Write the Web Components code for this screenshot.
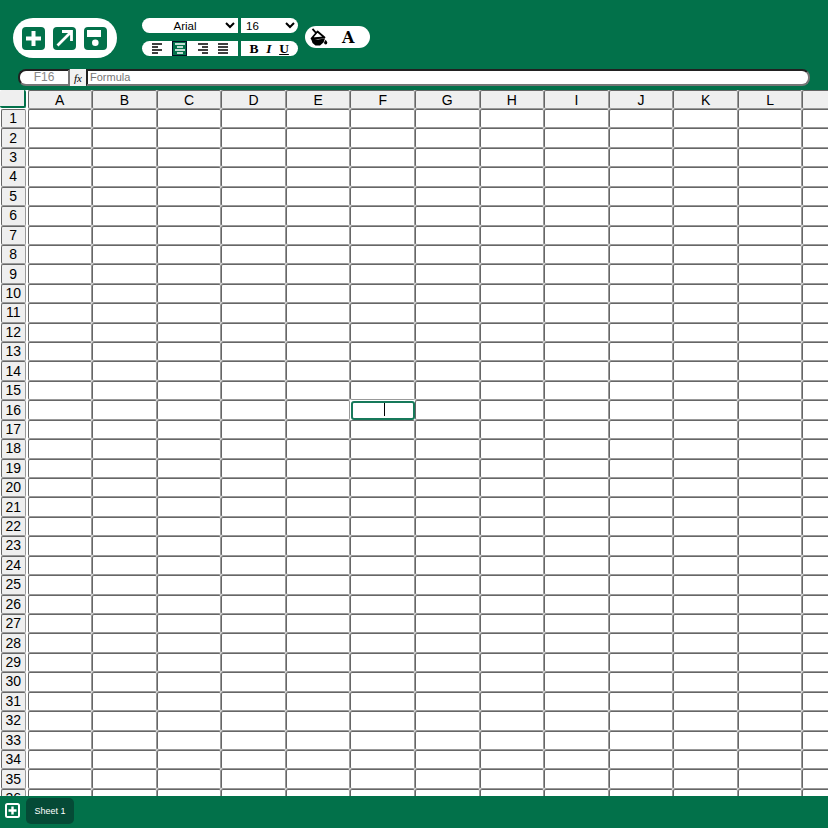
<!DOCTYPE html>
<html>
<head>
<meta charset="utf-8">
<title>Sheet</title>
<style>
  html, body { margin: 0; height: 100%; overflow: hidden; }
  body { font-family: "Liberation Sans", Arial, sans-serif; background: #fff; }
  #app { display: flex; flex-direction: column; height: 828px; }
</style>
</head>
<body>
<div id="app">
  <sheet-toolbar></sheet-toolbar>
  <sheet-grid></sheet-grid>
  <sheet-footer></sheet-footer>
</div>

<script>
const GREEN = "#02714a";

class SheetToolbar extends HTMLElement {
  constructor() {
    super();
    this._shadowRoot = this.attachShadow({ mode: "open" });
  }

  connectedCallback() {
    this.render();
  }

  render() {
    this._shadowRoot.innerHTML = `
    <style>
    :host {
      display: block;
      height: 90px;
      box-sizing: border-box;
      background: ${GREEN};
      padding: 18px 18px 0 13px;
      font-family: "Liberation Sans", Arial, sans-serif;
    }
    .top {
      display: flex;
      align-items: flex-start;
      height: 51px;
    }
    .file {
      display: flex;
      gap: 8px;
      align-items: center;
      box-sizing: border-box;
      width: 104px;
      height: 40px;
      padding-left: 9px;
      background: #fff;
      border-radius: 20px;
    }
    .file svg { width: 23px; height: 23px; display: block; }
    .format {
      display: grid;
      grid-template-columns: 96px 57px;
      grid-template-rows: 15px 15px;
      column-gap: 3px;
      row-gap: 8px;
      margin-left: 25px;
    }
    select {
      height: 15px;
      font: 11.5px "Liberation Sans", Arial, sans-serif;
      color: #000;
      background: #fff;
      border: 0;
      padding: 0;
      margin: 0;
      width: 100%;
    }
    .font { border-radius: 8px 0 0 8px; text-align: center; padding-left: 2px; }
    .size { border-radius: 0 8px 8px 0; padding-left: 1px; }
    .group {
      display: flex;
      align-items: center;
      height: 15px;
      background: #fff;
    }
    .align { border-radius: 8px 0 0 8px; padding-left: 7px; gap: 8px; }
    .style { border-radius: 0 8px 8px 0; padding-left: 8px; gap: 5px; }
    .align span {
      width: 15px;
      height: 15px;
      display: flex;
      align-items: center;
      justify-content: center;
      box-sizing: border-box;
    }
    .align span:last-child { margin-left: -3px; }
    .align span.on { background: ${GREEN}; border: 1px solid #012; }
    .align svg { width: 10px; height: 11px; display: block; }
    .style b, .style i, .style u {
      width: 10px;
      text-align: center;
      font: bold 13.5px "Liberation Serif", serif;
      color: #000;
    }
    .style i { font-style: italic; }
    .colors {
      display: flex;
      align-items: center;
      box-sizing: border-box;
      width: 65px;
      height: 22px;
      margin: 8px 0 0 7px;
      padding-left: 5px;
      background: #fff;
      border-radius: 11px;
    }
    .colors svg { width: 18px; height: 18px; display: block; }
    .colors span {
      margin-left: 14px;
      font: bold 16px "DejaVu Serif", serif;
      color: #000;
    }
    .formula {
      display: flex;
      height: 17px;
      margin-left: 5px;
    }
    input {
      box-sizing: border-box;
      height: 17px;
      margin: 0;
      padding: 0 2px 1px;
      border: 2px inset #767676;
      background: #fff;
      font: 11px "Liberation Sans", Arial, sans-serif;
      outline: 0;
    }
    input::placeholder { color: #757575; }
    .name {
      width: 52px;
      text-align: center;
      color: #888;
      font-size: 12px;
      border-radius: 8px 0 0 8px;
    }
    .fx {
      width: 16px;
      height: 17px;
      display: flex;
      align-items: center;
      justify-content: center;
      background: #f1f1f1;
      font: italic 11px "Liberation Serif", serif;
      color: #000;
    }
    .bar { flex: 1; border-radius: 0 8px 8px 0; }
    </style>

    <div class="top">
      <div class="file">
        <svg viewBox="0 0 23 23"><rect width="23" height="23" rx="4" fill="${GREEN}"/><path d="M9.500 4h4v5.500H19v4h-5.500V19h-4v-5.500H4v-4h5.500z" fill="#fff"/></svg>
        <svg viewBox="0 0 23 23"><rect width="23" height="23" rx="4" fill="${GREEN}"/><path d="M4.500 18.500 18 5M9 4.500h9.500V14" fill="none" stroke="#fff" stroke-width="2.800"/></svg>
        <svg viewBox="0 0 23 23"><rect width="23" height="23" rx="4" fill="${GREEN}"/><rect x="3" y="3" width="14" height="7" fill="#fff"/><circle cx="11.300" cy="15.700" r="3.300" fill="#fff"/></svg>
      </div>
      <div class="format">
        <select class="font"><option>Arial</option></select>
        <select class="size"><option>16</option></select>
        <div class="group align">
          <span><svg viewBox="0 0 10 11"><path d="M0 1h10M0 4h6M0 7h10M0 10h6" stroke="#000" stroke-width="1.300"/></svg></span>
          <span class="on"><svg viewBox="0 0 10 11"><path d="M0 1h10M2 4h6M0 7h10M2 10h6" stroke="#fff" stroke-width="1.300"/></svg></span>
          <span><svg viewBox="0 0 10 11"><path d="M0 1h10M4 4h6M0 7h10M4 10h6" stroke="#000" stroke-width="1.300"/></svg></span>
          <span><svg viewBox="0 0 10 11"><path d="M0 1h10M0 4h10M0 7h10M0 10h10" stroke="#000" stroke-width="1.300"/></svg></span>
        </div>
        <div class="group style"><b>B</b><i>I</i><u>U</u></div>
      </div>
      <div class="colors">
        <svg viewBox="0 0 18 18"><path d="M2.500 .800 6.500 5.500" fill="none" stroke="#000" stroke-width="1.800"/><path d="M1.500 10.500 7.500 3.500 14.500 9.500z" fill="#fff" stroke="#000" stroke-width="1.800" stroke-linejoin="round"/><path d="M1 10.500 8 11.500 15 10.500l-1.500 4-3.500 3H5.500L2.500 15z" fill="#000"/><path d="M15.700 11.800c.9 1.300 1.600 2.100 1.600 3a1.600 1.600 0 0 1-3.200 0c0-.9.700-1.700 1.600-3z" fill="#000"/></svg>
        <span>A</span>
      </div>
    </div>
    <div class="formula">
      <input class="name" value="F16">
      <div class="fx">fx</div>
      <input class="bar" placeholder="Formula">
    </div>
    `;
  }
}

class SheetGrid extends HTMLElement {
  constructor() {
    super();
    this._shadowRoot = this.attachShadow({ mode: "open" });
  }

  connectedCallback() {
    this.render();
  }

  render() {
    const letters = "ABCDEFGHIJKLM".split("");
    let html = `<div class="corner"></div>`;
    letters.forEach((l) => {
      html += `<div class="head">${l === "M" ? "" : l}</div>`;
    });
    for (let r = 1; r <= 36; r++) {
      html += `<div class="num">${r}</div>`;
      letters.forEach((l) => {
        const active = l === "F" && r === 16;
        html += `<div class="cell${active ? " active" : ""}">${active ? "<span></span>" : ""}</div>`;
      });
    }

    this._shadowRoot.innerHTML = `
    <style>
    :host {
      display: block;
      flex: 1;
      min-height: 0;
      overflow: hidden;
      background: #fff;
    }
    .table {
      display: grid;
      grid-template-columns: 27.5px repeat(13, 64.58px);
      grid-template-rows: 19px repeat(36, 19.43px);
      font: 14px "Liberation Sans", Arial, sans-serif;
      color: #000;
    }
    .table > div {
      box-sizing: border-box;
      border: 1px solid;
      border-color: #666 #999 #999 #666;
      border-radius: 2px;
      display: flex;
      align-items: center;
      justify-content: center;
    }
    .table > .corner {
      background: #efefef;
      border-width: 0 2px 2px 0;
      border-color: ${GREEN};
      margin: 0 2px 1px 0;
    }
    .head, .num { background: #efefef; }
    .head { padding-top: 1px; }
    .num { margin: 0 2px 0 1px; padding-bottom: 1px; }
    .table > .active {
      border: 2px solid #17795a;
      border-radius: 3px;
      margin: 1px 0 0 1px;
    }
    .active span { width: 1px; height: 13px; margin: 0 0 3px 2px; background: #000; }
    </style>
    <div class="table">${html}</div>
    `;
  }
}

class SheetFooter extends HTMLElement {
  constructor() {
    super();
    this._shadowRoot = this.attachShadow({ mode: "open" });
  }

  connectedCallback() {
    this.render();
  }

  render() {
    this._shadowRoot.innerHTML = `
    <style>
    :host {
      display: flex;
      align-items: center;
      height: 32px;
      box-sizing: border-box;
      padding: 0 0 3px 5px;
      background: ${GREEN};
      font-family: "Liberation Sans", Arial, sans-serif;
    }
    svg { width: 15px; height: 15px; display: block; }
    .tab {
      display: flex;
      align-items: center;
      justify-content: center;
      width: 48px;
      height: 26px;
      margin-left: 6px;
      background: #054a36;
      border-radius: 5px;
      color: #fff;
      font-size: 9px;
    }
    </style>
    <svg viewBox="0 0 15 15"><rect x="1" y="1" width="13" height="13" rx="1.500" fill="none" stroke="#fff" stroke-width="2"/><path d="M6.300 3.500h2.400v2.800h2.800v2.400H8.700v2.800H6.300V8.700H3.500V6.300h2.800z" fill="#fff"/></svg>
    <div class="tab">Sheet 1</div>
    `;
  }
}

customElements.define("sheet-toolbar", SheetToolbar);
customElements.define("sheet-grid", SheetGrid);
customElements.define("sheet-footer", SheetFooter);
</script>
</body>
</html>
